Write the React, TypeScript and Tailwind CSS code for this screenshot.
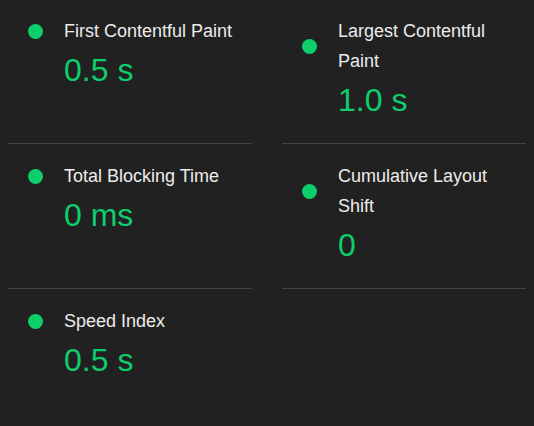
const metrics = [
  { title: 'First Contentful Paint', value: '0.5 s' },
  { title: 'Largest Contentful Paint', value: '1.0 s' },
  { title: 'Total Blocking Time', value: '0 ms' },
  { title: 'Cumulative Layout Shift', value: '0' },
  { title: 'Speed Index', value: '0.5 s' },
];

const Metric = ({ title, value, first, last }: { title: string; value: string; first: boolean; last: boolean }) => (
  <div className={`pb-[19px] ${last ? '' : 'border-b border-[#444444]'} ${first ? 'pt-4' : 'pt-[17px]'}`}>
    <div className="grid grid-cols-[56px_1fr] items-center">
      <span className="ml-5 w-[15px] h-[15px] rounded-full bg-[#0cce6b]" />
      <div className="text-[18px] leading-[30px] text-[#ececec]">{title}</div>
      <div className="col-start-2 text-[32px] leading-[48px] text-[#0cce6b]">{value}</div>
    </div>
  </div>
);

export default function App() {
  return (
    <div className="min-h-screen w-[534px] h-[426px] bg-[#212121] px-2 font-['Liberation_Sans',Arial,sans-serif]">
      <div className="grid grid-cols-2 gap-x-[30px]">
        {metrics.map((m, i) => (
          <Metric
            key={m.title}
            title={m.title}
            value={m.value}
            first={i < 2}
            last={i === metrics.length - 1}
          />
        ))}
      </div>
    </div>
  );
}
